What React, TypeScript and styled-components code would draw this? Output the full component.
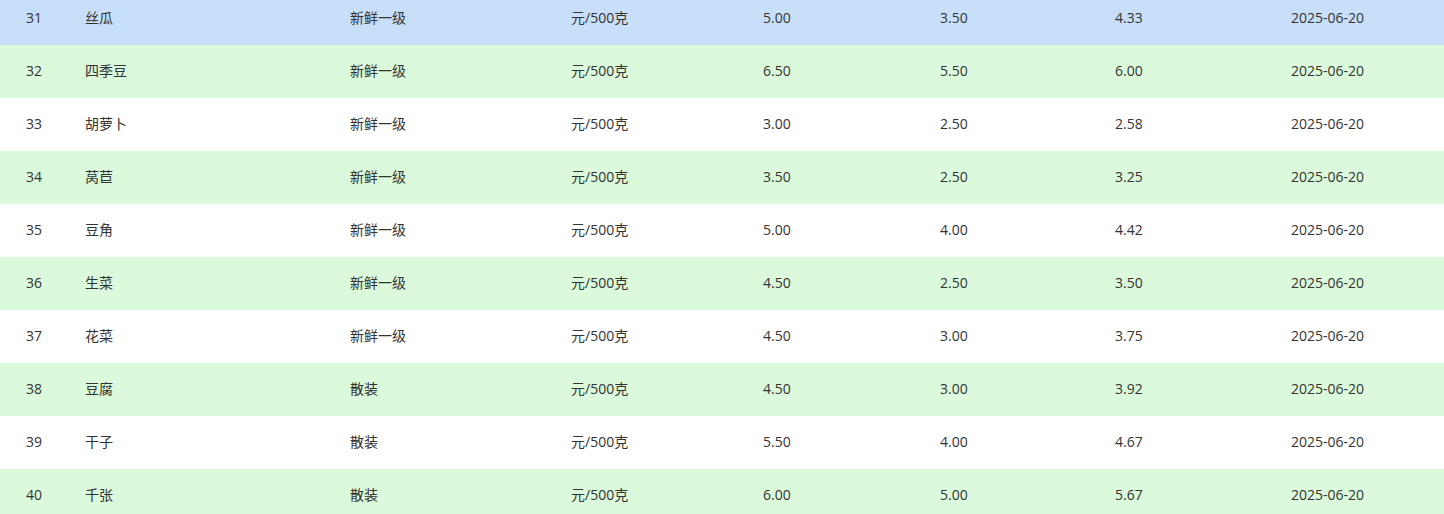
import styled, { createGlobalStyle } from "styled-components";

const GlobalStyle = createGlobalStyle`
  html, body {
    margin: 0;
    padding: 0;
    background: #ffffff;
    overflow: hidden;
  }
`;

const Wrap = styled.div`
  width: 1444px;
  height: 514px;
  overflow: hidden;
  font-family: "Open Sans", "Noto Sans CJK SC", sans-serif;
  font-size: 14px;
  color: #333333;
`;

const Body = styled.div`
  margin-top: -8px;
  display: flex;
  flex-direction: column;
`;

const Row = styled.div<{ $tone: "hover" | "stripe" | "plain" }>`
  display: grid;
  grid-template-columns: 59px 265px 221px 192px 177px 175px 176px 1fr;
  align-items: center;
  height: 53px;
  padding-left: 14px;
  background-color: ${(p) =>
    p.$tone === "hover" ? "#c8dff9" : p.$tone === "stripe" ? "#dbf9db" : "#ffffff"};
`;

const Cell = styled.div`
  padding: 0 12px 2px;
  white-space: nowrap;
  line-height: 20px;
`;

const rows = [
  ["31", "丝瓜", "新鲜一级", "5.00", "3.50", "4.33"],
  ["32", "四季豆", "新鲜一级", "6.50", "5.50", "6.00"],
  ["33", "胡萝卜", "新鲜一级", "3.00", "2.50", "2.58"],
  ["34", "莴苣", "新鲜一级", "3.50", "2.50", "3.25"],
  ["35", "豆角", "新鲜一级", "5.00", "4.00", "4.42"],
  ["36", "生菜", "新鲜一级", "4.50", "2.50", "3.50"],
  ["37", "花菜", "新鲜一级", "4.50", "3.00", "3.75"],
  ["38", "豆腐", "散装", "4.50", "3.00", "3.92"],
  ["39", "干子", "散装", "5.50", "4.00", "4.67"],
  ["40", "千张", "散装", "6.00", "5.00", "5.67"],
];

function App() {
  return (
    <>
      <GlobalStyle />
      <Wrap>
        <Body>
          {rows.map((r, i) => (
            <Row key={r[0]} $tone={i === 0 ? "hover" : i % 2 === 1 ? "stripe" : "plain"}>
              <Cell>{r[0]}</Cell>
              <Cell>{r[1]}</Cell>
              <Cell>{r[2]}</Cell>
              <Cell>元/500克</Cell>
              <Cell>{r[3]}</Cell>
              <Cell>{r[4]}</Cell>
              <Cell>{r[5]}</Cell>
              <Cell>2025-06-20</Cell>
            </Row>
          ))}
        </Body>
      </Wrap>
    </>
  );
}

export default App;
